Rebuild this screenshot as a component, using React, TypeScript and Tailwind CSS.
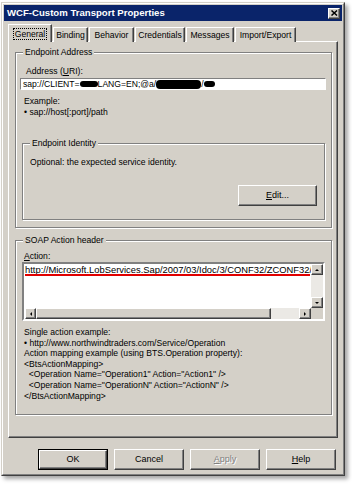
import React from 'react';

const raised =
  'border border-t-white border-l-white border-r-[#404040] border-b-[#404040] shadow-[inset_-1px_-1px_0_#808080]';

function Btn({ children, def, w = 'w-[70px]' }: { children: React.ReactNode; def?: boolean; w?: string }) {
  return (
    <div className={`${w} h-[21px] ${def ? 'border border-black' : ''}`}>
      <div className={`h-full w-full ${raised} bg-[#d4d0c8] flex items-center justify-center text-[9px]`}>
        {children}
      </div>
    </div>
  );
}

function GroupBox({
  label,
  className,
  children,
}: {
  label: string;
  className: string;
  children?: React.ReactNode;
}) {
  return (
    <div
      className={`relative border border-[#808080] shadow-[inset_1px_1px_0_white,1px_1px_0_white] ${className}`}
    >
      <span className="absolute -top-[6px] left-[7px] px-[2px] bg-[#d4d0c8] leading-[11px]">{label}</span>
      {children}
    </div>
  );
}

function Arrow({ dir }: { dir: 'up' | 'down' | 'left' | 'right' }) {
  const pts = {
    up: '2,5 4,3 6,5',
    down: '2,3 4,5 6,3',
    left: '5,2 3,4 5,6',
    right: '3,2 5,4 3,6',
  }[dir];
  return (
    <svg width="8" height="8" viewBox="0 0 8 8">
      <polygon points={pts} fill="black" />
    </svg>
  );
}

function ScrollBtn({ dir, className }: { dir: 'up' | 'down' | 'left' | 'right'; className: string }) {
  return (
    <div className={`${className} ${raised} bg-[#d4d0c8] flex items-center justify-center`}>
      <Arrow dir={dir} />
    </div>
  );
}

const tabs = [
  { name: 'Binding', w: 'w-[35px]' },
  { name: 'Behavior', w: 'w-[45px]' },
  { name: 'Credentials', w: 'w-[50px]' },
  { name: 'Messages', w: 'w-[48px]' },
  { name: 'Import/Export', w: 'w-[61px]' },
];

export default function App() {
  return (
    <div className="w-[352px] h-[484px] bg-white overflow-hidden font-['Liberation_Sans',Arial,sans-serif] text-[8.6px] text-black">
      <div className="ml-[1px] mt-[2px] w-[344px] h-[474px] bg-[#d4d0c8] border border-t-[#d4d0c8] border-l-[#d4d0c8] border-r-[#404040] border-b-[#404040] shadow-[3px_3px_4px_rgba(0,0,0,0.35)]">
        <div className="h-full border border-t-white border-l-white border-r-[#808080] border-b-[#808080] p-[1px] flex flex-col">
          {/* title bar */}
          <div className="h-[16px] bg-[#0a246a] flex items-center justify-between pl-[3px] pr-[2px]">
            <span className="text-white font-bold text-[9.6px] leading-none">WCF-Custom Transport Properties</span>
            <div className={`w-[12px] h-[11px] ${raised} bg-[#d4d0c8] flex items-center justify-center`}>
              <svg width="7" height="6" viewBox="0 0 7 6">
                <path d="M0.5 0.5 L6 5.5 M6 0.5 L0.5 5.5" stroke="black" strokeWidth="1.5" />
              </svg>
            </div>
          </div>

          {/* tabs */}
          <div className="mt-[3px] ml-[4px] h-[18px] flex items-end relative z-10 -mb-[1px]">
            <div className="w-[44px] h-[18px] bg-[#d4d0c8] border-t border-l border-t-white border-l-white border-r border-r-[#404040] shadow-[inset_-1px_0_0_#808080] flex items-center justify-center">
              <span className="border border-dotted border-black px-[1px] leading-[10px]">General</span>
            </div>
            {tabs.map((t) => (
              <div
                key={t.name}
                className={`${t.w} h-[15px] ml-[1px] bg-[#d4d0c8] border-t border-l border-t-white border-l-white border-r border-r-[#404040] shadow-[inset_-1px_0_0_#808080] flex items-center justify-center`}
              >
                {t.name}
              </div>
            ))}
          </div>

          {/* tab panel */}
          <div className={`ml-[4px] w-[330px] h-[397px] ${raised} flex flex-col`}>
            <GroupBox label="Endpoint Address" className="mt-[10px] ml-[6px] w-[317px] h-[176px] flex flex-col">
              <div className="mt-[13px] ml-[10px] leading-[11px]">
                Address (<span className="underline">U</span>RI):
              </div>
              <div className="mt-[1px] ml-[4px] w-[306px] h-[12px] bg-white border border-t-[#808080] border-l-[#808080] border-r-white border-b-white flex items-center pl-[2px] text-[8.6px] leading-none">
                <span>sap://CLIENT=</span>
                <span className="inline-block w-[18px] h-[6px] bg-black rounded-full"></span>
                <span>LANG=EN;@a/</span>
                <span className="inline-block w-[45px] h-[9px] bg-black rounded-[4px]"></span>
                <span>/</span>
                <span className="inline-block w-[11px] h-[6px] bg-black rounded-full"></span>
              </div>
              <div className="mt-[6px] ml-[8px] leading-[10.5px]">
                <div>Example:</div>
                <div>• sap://host[:port]/path</div>
              </div>
              <GroupBox label="Endpoint Identity" className="mt-[26px] ml-[6px] w-[303px] h-[77px] flex flex-col">
                <div className="mt-[13px] ml-[7px] leading-[11px]">Optional: the expected service identity.</div>
                <div className="mt-[17px] mr-[7px] flex justify-end">
                  <Btn w="w-[79px]">
                    <span>
                      <span className="underline">E</span>dit...
                    </span>
                  </Btn>
                </div>
              </GroupBox>
            </GroupBox>

            <GroupBox label="SOAP Action header" className="mt-[12px] ml-[6px] w-[317px] h-[175px] flex flex-col">
              <div className="mt-[10px] ml-[8px] leading-[11px]">
                <span className="underline">A</span>ction:
              </div>
              <div className="ml-[6px] w-[303px] h-[59px] border-2 border-t-[#808080] border-l-[#808080] border-r-white border-b-white shadow-[inset_1px_1px_0_#404040] flex">
                <div className="flex-1 min-w-0 flex flex-col bg-white pl-[1px] pt-[1px]">
                  <div className="flex-1 flex flex-col">
                    <div className="h-[9px] leading-[9px] whitespace-nowrap overflow-hidden text-[9.4px]">
                      http://Microsoft.LobServices.Sap/2007/03/Idoc/3/CONF32/ZCONF32/7
                    </div>
                    <div className="h-[2px] bg-[#e00000] mr-[1px]"></div>
                  </div>
                  <div className="h-[11px] flex bg-[#ebe9e5]">
                    <ScrollBtn dir="left" className="w-[11px] h-[11px]" />
                    <div className={`w-[235px] h-[11px] ${raised} bg-[#d4d0c8]`}></div>
                    <div className="flex-1"></div>
                    <ScrollBtn dir="right" className="w-[12px] h-[11px]" />
                  </div>
                </div>
                <div className="w-[12px] flex flex-col">
                  <ScrollBtn dir="up" className="w-[12px] h-[11px]" />
                  <div className="flex-1 bg-[#ebe9e5]"></div>
                  <ScrollBtn dir="down" className="w-[12px] h-[11px]" />
                  <div className="h-[11px] bg-[#d4d0c8]"></div>
                </div>
              </div>
              <div className="mt-[6px] ml-[8px] leading-[10.6px] whitespace-pre">
                <div>Single action example:</div>
                <div>• http://www.northwindtraders.com/Service/Operation</div>
                <div>Action mapping example (using BTS.Operation property):</div>
                <div>{'<BtsActionMapping>'}</div>
                <div>{'  <Operation Name="Operation1" Action="Action1" />'}</div>
                <div>{'  <Operation Name="OperationN" Action="ActionN" />'}</div>
                <div>{'</BtsActionMapping>'}</div>
              </div>
            </GroupBox>
          </div>

          {/* buttons */}
          <div className="mt-[11px] ml-[34px] flex gap-[6px]">
            <Btn def>OK</Btn>
            <Btn>Cancel</Btn>
            <Btn>
              <span className="text-[#808080] [text-shadow:1px_1px_0_white]">
                <span className="underline">A</span>pply
              </span>
            </Btn>
            <Btn>
              <span>
                <span className="underline">H</span>elp
              </span>
            </Btn>
          </div>
        </div>
      </div>
    </div>
  );
}
